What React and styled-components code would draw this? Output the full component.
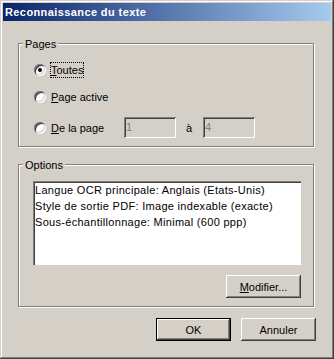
import React from "react";
import styled, { createGlobalStyle } from "styled-components";

const GlobalStyle = createGlobalStyle`
  html, body { margin: 0; padding: 0; background: #d4d0c8; }
  body {
    font-family: "Liberation Sans", Arial, sans-serif;
    font-size: 11px;
    color: #000;
  }
  * { box-sizing: border-box; }
`;

const raised = `
  box-shadow: inset -1px -1px #404040, inset 1px 1px #fff,
    inset -2px -2px #808080, inset 2px 2px #d4d0c8;
`;

const sunken = `
  box-shadow: inset 1px 1px #808080, inset -1px -1px #fff,
    inset 2px 2px #404040, inset -2px -2px #d4d0c8;
`;

const Window = styled.div`
  width: 334px;
  height: 359px;
  padding: 3px;
  background: #d4d0c8;
  box-shadow: inset -1px -1px #404040, inset 1px 1px #d4d0c8,
    inset -2px -2px #808080, inset 2px 2px #fff;
  display: flex;
  flex-direction: column;
`;

const TitleBar = styled.div`
  height: 18px;
  padding-left: 2px;
  background: linear-gradient(to right, #0a246a, #a6caf0);
  color: #fff;
  font-weight: bold;
  font-size: 11px;
  letter-spacing: 0.4px;
  line-height: 18px;
  white-space: nowrap;
`;

const Body = styled.div`
  padding: 22px 17px 0 15px;
  display: flex;
  flex-direction: column;
`;

const Group = styled.div`
  position: relative;
  border: 1px solid #808080;
  box-shadow: inset 1px 1px #fff, 1px 1px #fff;
  padding: ${(p) => p.$pad};
  margin-top: ${(p) => p.$mt || 0}px;
  display: flex;
  flex-direction: column;
`;

const Legend = styled.span`
  position: absolute;
  top: -6px;
  left: 4px;
  padding: 0 2px;
  background: #d4d0c8;
  line-height: 13px;
`;

const RadioRow = styled.div`
  display: flex;
  align-items: center;
  height: ${(p) => p.$h}px;
  margin-top: ${(p) => p.$mt || 0}px;
`;

const RadioCircle = styled.span`
  position: relative;
  flex: none;
  width: 12px;
  height: 12px;
  border-radius: 50%;
  background: #fff;
  ${sunken}
  &::after {
    content: "";
    display: ${(p) => (p.$checked ? "block" : "none")};
    position: absolute;
    left: 4px;
    top: 4px;
    width: 4px;
    height: 4px;
    border-radius: 50%;
    background: #000;
  }
`;

const RadioLabel = styled.span`
  margin-left: 4px;
  border: 1px dotted ${(p) => (p.$focus ? "#000" : "transparent")};
  line-height: 14px;
  white-space: nowrap;
  width: ${(p) => (p.$w ? `${p.$w}px` : "auto")};
`;

const TextField = styled.div`
  width: 52px;
  height: 21px;
  padding: 2px 2px;
  line-height: 17px;
  background: #d4d0c8;
  color: #808080;
  ${sunken}
`;

const Sep = styled.span`
  width: 27px;
  padding-left: 10px;
  line-height: 14px;
`;

const ListBox = styled.div`
  width: 268px;
  height: 84px;
  padding: 1px 2px;
  background: #fff;
  line-height: 16px;
  letter-spacing: 0.3px;
  white-space: nowrap;
  box-shadow: inset 1px 1px #808080, inset 2px 2px #404040;
`;

const ListLine = styled.div``;

const ButtonRow = styled.div`
  display: flex;
  justify-content: flex-end;
  gap: 10px;
  margin-top: ${(p) => p.$mt}px;
  margin-right: ${(p) => p.$mr || 0}px;
`;

const Button = styled.button`
  width: 75px;
  height: 23px;
  margin: 0;
  padding: 0;
  background: #d4d0c8;
  color: #000;
  font-family: "Liberation Sans", Arial, sans-serif;
  font-size: 11px;
  border: ${(p) => (p.$default ? "1px solid #000" : "none")};
  ${raised}
`;

export default function App() {
  return (
    <>
      <GlobalStyle />
      <Window>
        <TitleBar>Reconnaissance du texte</TitleBar>
        <Body>
          <Group $pad="18px 0 8px 15px">
            <Legend>Pages</Legend>
            <RadioRow $h={16}>
              <RadioCircle $checked />
              <RadioLabel $focus>
                <u>T</u>outes
              </RadioLabel>
            </RadioRow>
            <RadioRow $h={16} $mt={11}>
              <RadioCircle />
              <RadioLabel>
                <u>P</u>age active
              </RadioLabel>
            </RadioRow>
            <RadioRow $h={21} $mt={12}>
              <RadioCircle />
              <RadioLabel $w={74}>
                <u>D</u>e la page
              </RadioLabel>
              <TextField>1</TextField>
              <Sep>à</Sep>
              <TextField>4</TextField>
            </RadioRow>
          </Group>
          <Group $pad="16px 12px 8px 14px" $mt={17}>
            <Legend>Options</Legend>
            <ListBox>
              <ListLine>Langue OCR principale: Anglais (Etats-Unis)</ListLine>
              <ListLine>Style de sortie PDF: Image indexable (exacte)</ListLine>
              <ListLine>Sous-échantillonnage: Minimal (600 ppp)</ListLine>
            </ListBox>
            <ButtonRow $mt={10}>
              <Button>
                <u>M</u>odifier...
              </Button>
            </ButtonRow>
          </Group>
          <ButtonRow $mt={11} $mr={-2}>
            <Button $default>OK</Button>
            <Button>Annuler</Button>
          </ButtonRow>
        </Body>
      </Window>
    </>
  );
}
